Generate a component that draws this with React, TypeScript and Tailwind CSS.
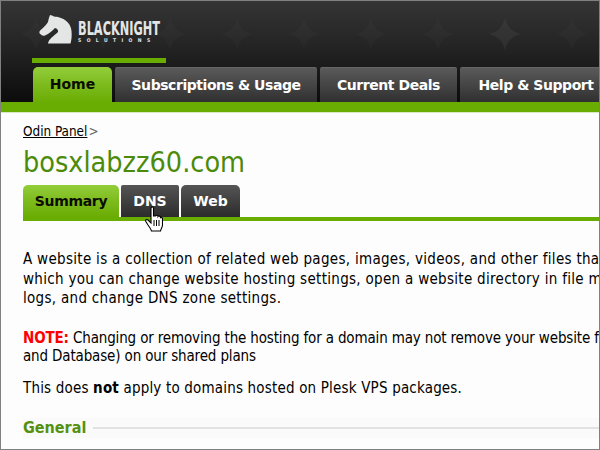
const navTabs = ["Subscriptions & Usage", "Current Deals", "Help & Support"];

const Horse = () => (
  <svg width="34" height="31" viewBox="0 0 34 31" className="shrink-0">
    <path
      d="M11 1 L13 1.5 C15 3 17 2.5 19 3 C27 5 32 10 32.5 17 C33 22 32.5 26 31.5 29.5 L9 29.5 C9.5 25 15 22 19 18 C19.5 16 18 14.5 16 14 C13 17 10 20 6 21.5 C4 22 2.5 21.5 2 20.5 C1 20 0 19 0.5 17.5 C2 15 6 13 9 8 C9.5 6 10 3 11 1 Z"
      fill="#e4e5e5"
    />
  </svg>
);

// faint four point stars behind the header
const HeaderStars = () => (
  <svg width="600" height="66" viewBox="0 0 600 66" className="absolute top-0 left-0">
    {[35, 102, 169, 236, 303, 370, 437, 504, 571].map((x) => (
      <path
        key={x}
        d={`M${x} 17 Q${x + 3} 30 ${x + 16} 33 Q${x + 3} 36 ${x} 49 Q${x - 3} 36 ${x - 16} 33 Q${x - 3} 30 ${x} 17Z`}
        fill="#ffffff"
        fillOpacity={x === 504 ? 0.05 : 0.018}
      />
    ))}
  </svg>
);

const App = () => {
  return (
    <div className="w-[600px] h-[450px] overflow-hidden border border-[#808080] bg-[#fdfdfd] font-['DejaVu_Sans_Condensed','DejaVu_Sans',sans-serif] text-black">
      <div className="relative h-[101px] bg-gradient-to-b from-[#353535] via-[#222222] to-[#0c0c0c] overflow-hidden">
        <HeaderStars />
        <div className="relative w-[134px] ml-[31px] pt-[13px]">
          <div className="flex items-start gap-[5px] pl-[7px] h-[44px]">
            <Horse />
            <div className="pt-[4px] text-[#e4e5e5] leading-none">
              <div className="text-[20px] h-[20px] font-bold origin-left scale-x-[0.63] whitespace-nowrap">
                BLACKNIGHT
              </div>
              <div className="text-[5px] tracking-[5.4px] font-bold whitespace-nowrap">SOLUTIONS</div>
            </div>
          </div>
          <div className="h-[5px] bg-[#6aad02]" />
        </div>
        <div className="absolute left-0 bottom-0 flex pl-[32px] gap-[3px] w-full">
          <div className="w-[79px] shrink-0 h-[35px] rounded-t-[5px] bg-gradient-to-b from-[#93ce3a] via-[#7dbb1c] to-[#6aad02] flex items-center justify-center font-['DejaVu_Sans',sans-serif] font-bold text-[14px] text-[#0c0c00]">
            Home
          </div>
          {navTabs.map((t, i) => (
            <div
              key={t}
              className={`h-[35px] rounded-t-[2px] border-t border-[#666666] bg-gradient-to-b from-[#5a5a5a] via-[#454545] to-[#303030] flex items-center justify-center font-['DejaVu_Sans',sans-serif] font-bold text-[14px] tracking-[-0.45px] text-white whitespace-nowrap shrink-0 ${
                i === 0 ? "w-[202px]" : i === 1 ? "w-[137px]" : "w-[152px]"
              }`}
            >
              {t}
            </div>
          ))}
        </div>
      </div>
      <div className="h-[11px] bg-[#6aad02] border-b border-[#d9e8c4]" />

      <div className="px-[22px] pt-[10px]">
        <div className="text-[13.4px] leading-[18px] flex items-center">
          <span className="underline">Odin Panel</span>
          <span className="text-[#666666] ml-[1px]">&gt;</span>
        </div>
        <h1 className="text-[28.5px] leading-[36px] mt-[4px] text-[#4c8a0a] whitespace-nowrap">bosxlabzz60.com</h1>

        <div className="relative mt-[4px] -mr-[22px] flex gap-[2px] border-b-[4px] border-[#6aad02] h-[36px]">
          <div className="w-[96px] rounded-t-[5px] bg-gradient-to-b from-[#93ce3a] via-[#7dbb1c] to-[#6aad02] flex items-center justify-center font-['DejaVu_Sans',sans-serif] font-bold text-[14px] tracking-[-0.3px] text-[#0c0c00]">
            Summary
          </div>
          <div className="w-[58px] rounded-t-[2px] bg-gradient-to-b from-[#555555] to-[#2c2c2c] flex items-center justify-center font-['DejaVu_Sans',sans-serif] font-bold text-[14px] text-white">
            DNS
          </div>
          <div className="w-[59px] rounded-t-[5px] bg-gradient-to-b from-[#555555] to-[#2c2c2c] flex items-center justify-center font-['DejaVu_Sans',sans-serif] font-bold text-[14px] text-white">
            Web
          </div>
          <svg width="18" height="26" viewBox="0 0 18 26" className="absolute left-[122px] top-[21px]">
            <path
              d="M6 2 C6 0.5 8.5 0.5 8.5 2 L8.5 10 L10.5 10 C11 9 13 9 13 10.5 C13.5 9.7 15.5 10 15.5 11.5 C16 11 17.5 11.5 17.5 13 L17.5 19 C17.5 21 16 23 15.5 25 L6.5 25 C6 23 4.5 21 3 19 L0.8 15.5 C0 14 2 13 3 14 L6 17 Z"
              fill="#ffffff"
              stroke="#000000"
              strokeWidth="1.1"
            />
            <path d="M9 14 V20 M11.5 14 V20 M14 14 V20" stroke="#000000" strokeWidth="1" />
          </svg>
        </div>

        <div className="w-[800px] text-[15px] leading-[19.5px] whitespace-nowrap">
          <p className="mt-[29px] tracking-[0.3px]">
            A website is a collection of related web pages, images, videos, and other files that
            <br />
            which you can change website hosting settings, open a website directory in file manager,
            <br />
            logs, and change DNS zone settings.
          </p>
          <p className="mt-[20px] leading-[18px] tracking-[-0.15px]">
            <b className="text-[#ff0000]">NOTE:</b> Changing or removing the hosting for a domain may not remove your website files
            <br />
            and Database) on our shared plans
          </p>
          <p className="mt-[14px] tracking-[0.18px]">
            This does <b>not</b> apply to domains hosted on Plesk VPS packages.
          </p>
        </div>

        <div className="mt-[20px] -mr-[22px] flex items-center gap-[7px] h-[20px] bg-[#fafafa]">
          <span className="font-bold text-[16px] text-[#559110]">General</span>
          <div className="flex-1 h-[2px] bg-[#e2e2e2]" />
        </div>
      </div>
    </div>
  );
};

export default App;
